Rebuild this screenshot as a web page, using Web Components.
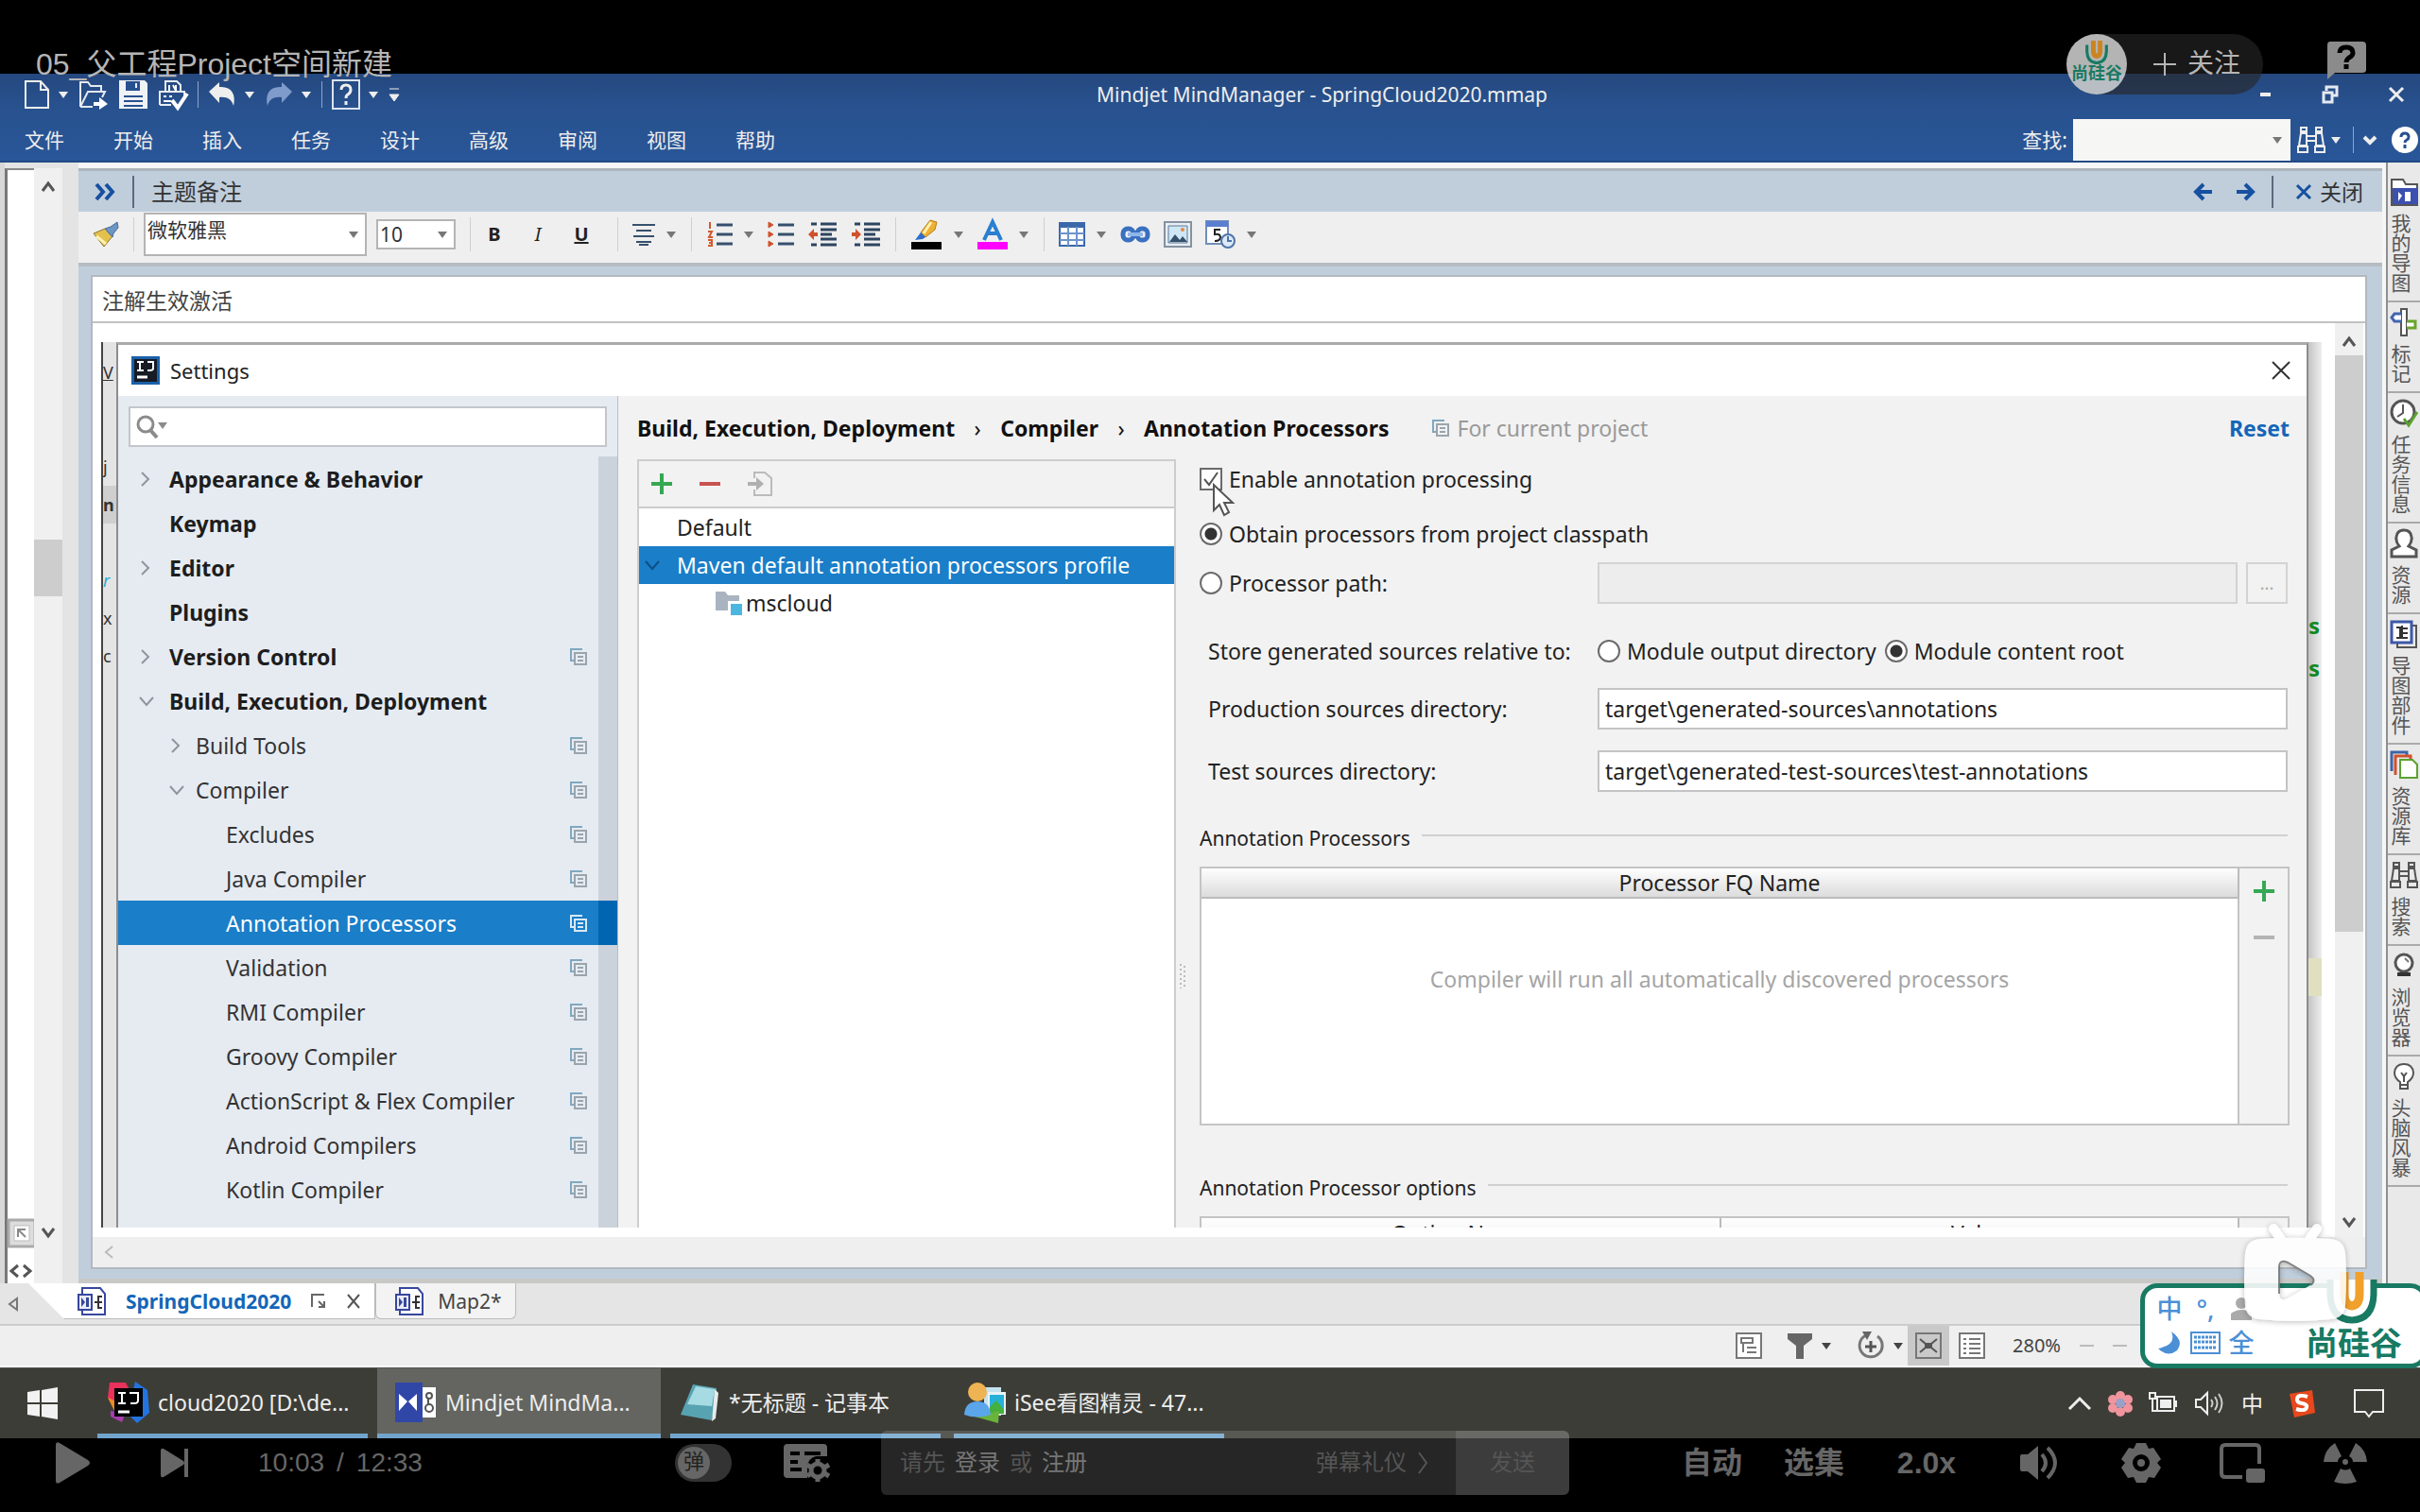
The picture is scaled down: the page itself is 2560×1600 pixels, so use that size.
<!DOCTYPE html>
<html lang="zh-CN">
<head>
<meta charset="utf-8">
<title>05_父工程Project空间新建</title>
<style>
  html, body { margin: 0; height: 100%; background: #000; }
  body { font-family: "Noto Sans", "Noto Sans CJK SC", sans-serif; font-size: 23px; line-height: 30px; color: #222; }
</style>
</head>
<body>
<video-page></video-page>

<script>
// name: [width, height, svg markup]
const ICONS = {
  doc: [28, 32, '<path d="M2 2h16l8 9v19H2zM18 2v9h8" fill="none" stroke="#eee" stroke-width="2"/>'],
  open: [32, 32, '<path d="M2 29V3h8l3 4h11v6M2 29l8-16h18l-3 6M2 29h13" fill="none" stroke="#e4e9f2" stroke-width="2"/><path d="M16 24h6v-5l9 7-9 6v-4h-6z" fill="#fff"/>'],
  save: [32, 32, '<path d="M1 1h27l3 3v27H1z" fill="#f0f2f6"/><path d="M8 2h15v10H8z" fill="#27508f"/><path d="M17 3h4v7h-4zM6 18h20M6 23h20M6 28h20" fill="#eef" stroke="#27508f" stroke-width="2"/>'],
  print: [32, 32, '<path d="M8 13V2h12l4 4v7M2 27V13h26v6M2 27h12" fill="none" stroke="#e8ecf4" stroke-width="2"/><path d="M12 6v6M16 6l3 6V6M6 18h3M12 18h3M6 23h8" stroke="#fff" stroke-width="2"/><path d="M15 22l6 8L31 15" fill="none" stroke="#fff" stroke-width="4"/>'],
  undo: [30, 28, '<path d="M1 11L12 1v5c13-1 18 8 15 20-2-7-7-10-15-9v6z" fill="#eee"/>'],
  redo: [30, 28, '<path d="M29 11L18 1v5C5 5 0 14 3 26c2-7 7-10 15-9v6z" fill="#7f9bcb"/>'],
  helpbox: [30, 32, '<path d="M1 1h28v30H1z" fill="none" stroke="#dbe2ef" stroke-width="2"/><path d="M10 11q0-5 5-5t5 5q0 3-3 5-2 1-2 4M15 23v4" fill="none" stroke="#eee" stroke-width="3"/>'],
  caret: [12, 8, '<path d="M1 1h10L6 8z" fill="currentColor"/>'],
  more: [12, 16, '<path d="M1 2h10M1 8h10L6 15z" fill="#eee" stroke="#eee"/>'],
  min: [14, 6, '<path d="M1 1h11v4H1z" fill="#eee"/>'],
  restore: [18, 20, '<path d="M5 6V2h11v9h-4M2 8h9v10H2z" fill="none" stroke="#e5e9f2" stroke-width="3"/>'],
  cross: [18, 20, '<path d="M2 3l14 14M16 3L2 17" stroke="currentColor" stroke-width="3" fill="none"/>'],
  thincross: [22, 22, '<path d="M2 2l18 18M20 2L2 20" stroke="#333" stroke-width="2"/>'],
  binoc: [32, 30, '<g fill="none" stroke="currentColor" stroke-width="2"><path d="M5 2h6v4H5zM21 2h6v4h-6zM5 8h6v13H3zM21 8h6l2 13h-8zM2 22h10v6H2zM20 22h10v6H20zM11 11h10M11 16h10"/></g>'],
  chevd: [14, 12, '<path d="M1 3l6 6 6-6" stroke="currentColor" stroke-width="4" fill="none"/>'],
  helpround: [28, 28, '<circle cx="14" cy="14" r="14" fill="#fff"/><path d="M10 11q0-4 4-4t4 4q0 2-2 3t-2 3M14 19v4" fill="none" stroke="#27508f" stroke-width="3"/>'],
  dbl: [22, 20, '<path d="M2 2l7 8-7 8M12 2l7 8-7 8" fill="none" stroke="#1750a0" stroke-width="4"/>'],
  left: [20, 20, '<path d="M19 10H3M10 2l-8 8 8 8" fill="none" stroke="#1750a0" stroke-width="4"/>'],
  right: [20, 20, '<path d="M1 10h16M10 2l8 8-8 8" fill="none" stroke="#1750a0" stroke-width="4"/>'],
  up: [16, 14, '<path d="M2 12l6-8 6 8" fill="none" stroke="#555" stroke-width="3"/>'],
  down: [16, 14, '<path d="M2 2l6 8 6-8" fill="none" stroke="#555" stroke-width="3"/>'],
  scrollleft: [12, 16, '<path d="M10 2L3 8l7 6" fill="none" stroke="#bbb" stroke-width="2"/>'],
  brush: [28, 28, '<path d="M1 13l12-5 8 8-9 11z" fill="#e4c04f" stroke="#8c7630"/><path d="M4 16l10 8" stroke="#fff3b0" stroke-width="3"/><path d="M13 8l6-2 7-5 1 6-5 6-1 4z" fill="#6d96c4" stroke="#456a98"/>'],
  center: [24, 24, '<path d="M0 2h24M4 8h16M1 14h22M4 20h16M7 23h10" stroke="#36506c" stroke-width="2"/>'],
  numlist: [28, 28, '<path d="M11 4h17M11 14h17M11 24h17" stroke="#36506c" stroke-width="3"/><path d="M4 1v7M2 11h4l-3 6h4M2 20h4v6H2M3 23h3" stroke="#d25a30" stroke-width="2" fill="none"/>'],
  bullist: [28, 28, '<path d="M11 4h17M11 14h17M11 24h17" stroke="#36506c" stroke-width="3"/><path d="M1 1l5 3-5 3zM1 11l5 3-5 3zM1 21l5 3-5 3z" fill="#d0522c" stroke="#d0522c"/>'],
  outdent: [32, 26, '<path d="M4 2h6M14 2h17M14 8h17M14 13h12M14 18h17M4 24h6M14 24h17" stroke="#2d4560" stroke-width="3"/><path d="M1 13l6-6v4h4v4H7v4z" fill="#d0522c"/>'],
  indent: [32, 26, '<path d="M4 2h6M14 2h17M14 8h17M14 13h12M14 18h17M4 24h6M14 24h17" stroke="#2d4560" stroke-width="3"/><path d="M11 13L5 7v4H1v4h4v4z" fill="#d0522c"/>'],
  mark: [34, 32, '<path d="M1 24h32v8H1z" fill="#000"/><path d="M11 14L21 1l7 2-2 8-10 8z" fill="#efb132" stroke="#b37d17"/><path d="M22 3l-8 12" stroke="#fff0b0" stroke-width="3"/><path d="M5 22l6-8 5 5-3 2z" fill="#2e6ecb"/>'],
  acolor: [32, 32, '<path d="M0 24h32v8H0z" fill="#f0f"/><path d="M7 22L16 3l9 19M11 15h10" fill="none" stroke="#2a7fd0" stroke-width="4"/>'],
  grid: [28, 26, '<path d="M1 1h26v24H1z" fill="#fff" stroke="#3b68ab" stroke-width="2"/><path d="M1 1h26v5H1z" fill="#3b68ab"/><path d="M10 5v20M19 5v20M1 12h26M1 19h26" stroke="#6d94cc" stroke-width="2"/>'],
  chain: [32, 18, '<g fill="none" stroke="#3a70c0" stroke-width="5"><rect x="3" y="3" width="11" height="12" rx="5"/><rect x="18" y="3" width="11" height="12" rx="5"/></g><path d="M8 9h16" stroke="#8fb6ea" stroke-width="4"/>'],
  pic: [30, 28, '<path d="M1 1h28v26H1z" fill="#e9eef4" stroke="#8492a2" stroke-width="2"/><path d="M5 5h20v18H5z" fill="#cfe6f5" stroke="#5e7894"/><path d="M6 22l6-8 5 6 3-4 5 6z" fill="#36506c"/><circle cx="20" cy="9" r="2" fill="#e58a40"/>'],
  date: [32, 30, '<path d="M1 1h23v24H1z" fill="#fff" stroke="#718db8" stroke-width="2"/><path d="M1 1h23v6H1z" fill="#5b7fd0"/><path d="M16 10h-6v5q6-1 6 3t-6 4" fill="none" stroke="#222" stroke-width="2"/><circle cx="24" cy="22" r="7" fill="#dce9f8" stroke="#4d73a8" stroke-width="2"/><path d="M24 17v5h4" stroke="#4d73a8" stroke-width="2" fill="none"/>'],
  idea: [30, 30, '<path d="M0 0h30v30H0z" fill="#1b61a8"/><path d="M3 3h24v24H3z" fill="#161b24"/><path d="M6 6h7M9 6v9M6 15h7M17 6h6v7q0 2-4 2h-2" fill="none" stroke="#fff" stroke-width="2"/><path d="M6 22h11" stroke="#fff" stroke-width="3"/>'],
  find: [34, 26, '<circle cx="11" cy="10" r="8" fill="none" stroke="#8b8b8b" stroke-width="3"/><path d="M16 16l7 8" stroke="#8b8b8b" stroke-width="4"/><path d="M24 8h10l-5 7z" fill="#8b8b8b"/>'],
  treeright: [12, 16, '<path d="M3 1l7 7-7 7" fill="none" stroke="#8f959c" stroke-width="2"/>'],
  treedown: [16, 12, '<path d="M1 2l7 8 7-8" fill="none" stroke="currentColor" stroke-width="2"/>'],
  copy: [18, 18, '<path d="M13 1H1v12h3" fill="none" stroke="var(--copy-a, #7fa8c0)" stroke-width="2"/><path d="M5 5h12v12H5z" fill="none" stroke="var(--copy-b, #9aa4ac)" stroke-width="2"/><path d="M8 9h6M8 13h6" stroke="var(--copy-b, #9aa4ac)" stroke-width="2"/>'],
  plus: [24, 24, '<path d="M12 1v22M1 12h22" stroke="#35a853" stroke-width="4"/>'],
  minus: [24, 24, '<path d="M1 12h22" stroke="currentColor" stroke-width="4"/>'],
  import: [28, 28, '<path d="M8 8V2h11l7 6v18H8v-6" fill="none" stroke="#bbb" stroke-width="2"/><path d="M1 14h10" stroke="#b0b0b0" stroke-width="4"/><path d="M10 7l8 7-8 7z" fill="#b0b0b0"/>'],
  module: [30, 28, '<path d="M1 2h10l3 4h12v16H1z" fill="#a9b4c0"/><path d="M14 12h15v15H14z" fill="#fff"/><path d="M17 15h12v12H17z" fill="#4bb7e0"/>'],
  pointer: [24, 36, '<path d="M2 2v27l6-6 5 11 5-3-5-10h9z" fill="#fff" stroke="#555" stroke-width="2"/>'],
  grip: [8, 28, '<path d="M2 1v26M6 3v24" stroke="#bbb" stroke-width="2" stroke-dasharray="2 3"/>'],
  mymap: [30, 30, '<path d="M2 29V2h12l3 5h12v22z" fill="#fff" stroke="#555" stroke-width="2"/><path d="M3 11h26v17H3z" fill="#3c50b0"/><path d="M9 15l4 4-4 6zM16 15h6v10h-6z" fill="#fff"/>'],
  tag: [30, 30, '<path d="M12 1h6v28h-6z" fill="#fff" stroke="#555" stroke-width="2"/><path d="M12 6H5l-3 4 3 4h7" fill="#fff" stroke="#4466b0" stroke-width="3"/><path d="M18 14h9v7h-9" fill="#fff" stroke="#6aa52c" stroke-width="3"/>'],
  task: [30, 30, '<circle cx="14" cy="14" r="12" fill="#fff" stroke="#555" stroke-width="3"/><path d="M14 6v9l-6 4" fill="none" stroke="#555" stroke-width="2"/><path d="M15 21l5 7 9-14" fill="none" stroke="#5ba22e" stroke-width="3"/>'],
  person: [30, 30, '<path d="M10 18q-4-5-3-10 1-7 8-7t8 7q1 5-3 10l8 4v7H2v-7z" fill="#fff" stroke="#555" stroke-width="3"/>'],
  parts: [30, 30, '<path d="M8 8v21h20V6h-4" fill="none" stroke="#555" stroke-width="2"/><path d="M2 2h21v22H2z" fill="#fff" stroke="#3d58a8" stroke-width="3"/><path d="M7 8h4v11H7M13 6v14M13 9h6M13 14h6M13 19h6" stroke="#333" fill="none" stroke-width="2"/>'],
  lib: [30, 30, '<path d="M2 22V2h16v4" fill="none" stroke="#3f64a8" stroke-width="3"/><path d="M6 26V6h16v4" fill="none" stroke="#d0522c" stroke-width="3"/><path d="M11 10h13l5 5v14H11z" fill="#fff" stroke="#5ba22e" stroke-width="2"/>'],
  globe: [30, 30, '<circle cx="15" cy="12" r="9" fill="#fff" stroke="#555" stroke-width="3"/><path d="M8 22h14v4H8z" fill="#333"/><path d="M16 7l4 4" stroke="#777" stroke-width="2"/>'],
  bulb: [30, 30, '<path d="M11 21q-6-4-6-10 1-9 10-9t10 9q0 6-6 10v7h-8zM11 24h8M12 11l3 4 3-4M15 15v6" fill="#fff" stroke="#555" stroke-width="2"/>'],
  tri: [12, 16, '<path d="M10 2L2 8l8 6z" fill="none" stroke="#777" stroke-width="2"/>'],
  mapdoc: [30, 32, '<path d="M5 2h19l5 6v22H5z" fill="#fff" stroke="#37479d" stroke-width="2"/><path d="M1 9h14v16H1z" fill="#e9ecfa" stroke="#37479d" stroke-width="2"/><path d="M4 12l4 5-4 5zM9 12h3v10H9z" fill="#37479d"/><path d="M18 17h4M26 11h-4v12h4M22 17h4" stroke="#333" stroke-width="2" fill="none"/>'],
  pin: [16, 16, '<path d="M1 14V1h13M8 8l6 6M14 8v6H8" fill="none" stroke="#666" stroke-width="2"/>'],
  tabx: [16, 18, '<path d="M2 2l12 14M14 2L2 16" stroke="#555" stroke-width="2"/>'],
  form: [28, 28, '<path d="M1 1h26v26H1z" fill="#fff" stroke="#777" stroke-width="2"/><path d="M6 6h12v5H6zM12 16h10M12 21h10M8 11v10" fill="none" stroke="#777" stroke-width="2"/>'],
  funnel: [28, 28, '<path d="M1 1h26v6l-9 7v14h-8V14L1 7z" fill="#666"/>'],
  zoomfit: [30, 30, '<path d="M22 5a12 12 0 1 1-12-1" fill="none" stroke="#777" stroke-width="3"/><path d="M6 0h10l-5 9z" fill="#666"/><path d="M15 10v12M9 16h12" stroke="#555" stroke-width="3"/>'],
  fitmap: [28, 28, '<path d="M1 1h26v26H1z" fill="none" stroke="#777" stroke-width="2"/><path d="M5 7l6 5M23 7l-6 5M5 21l6-5M23 21l-6-5" stroke="#555" stroke-width="2"/><path d="M10 11h8v6h-8z" fill="#555"/>'],
  outline: [28, 28, '<path d="M1 1h26v26H1z" fill="#fff" stroke="#777" stroke-width="2"/><path d="M5 7h3M11 7h12M5 12h3M11 12h12M5 17h3M11 17h12M5 22h3M11 22h12" stroke="#777" stroke-width="2"/>'],
  win: [34, 34, '<path d="M1 5l13-2v13H1zM16 3l17-3v16H16zM1 18h13v13L1 29zM16 18h17v16l-17-3z" fill="#f2f2f2"/>'],
  ij: [46, 46, '<path d="M3 2h17l6 12-8 18L1 18z" fill="#e8315b"/><path d="M1 18l9 4v14z" fill="#f08a24"/><path d="M30 1l13 9 2 24-13 11-10-10z" fill="#2374e1"/><path d="M4 32l16 2-4 10-12-6z" fill="#a93cb0"/><path d="M8 8h30v30H8z" fill="#000"/><path d="M12 13h8M16 13v11M12 24h8M24 13h9v8q0 3-4 3h-4" stroke="#fff" stroke-width="2" fill="none"/><path d="M12 33h12" stroke="#fff" stroke-width="3"/>'],
  mm: [46, 44, '<path d="M28 6h16v32H28z" fill="#fff"/><path d="M1 1h29v42H1z" fill="#3147a8"/><path d="M5 13l9 8-9 10zM15 21l9-8v18z" fill="#fff"/><circle cx="37" cy="15" r="3" fill="none" stroke="#555" stroke-width="2"/><circle cx="37" cy="28" r="4" fill="none" stroke="#555" stroke-width="2"/><path d="M36 18v6" stroke="#555" stroke-width="2"/>'],
  note: [44, 44, '<path d="M14 3l25 4-5 34L1 35z" fill="#57a3b2"/><path d="M17 5l20 3-3 18-26-2z" fill="#a6dbe3"/><path d="M37 8l4 4-3 27-4 3z" fill="#e6eceb"/>'],
  isee: [46, 46, '<path d="M22 7h18v30H22z" fill="#c4e2f0"/><path d="M26 12h19v24H26z" fill="#e9f3f6"/><path d="M28 15h15v18H28z" fill="#27b0d8"/><path d="M28 28l7-7 8 10v4H28z" fill="#45b03b"/><path d="M12 38l26-6-1 13z" fill="#69b33a"/><path d="M1 36q1-14 14-14t14 14q-14 5-28 0z" fill="#5ba6ea"/><circle cx="15" cy="12" r="10" fill="#eeb352"/>'],
  trayup: [26, 16, '<path d="M2 14L13 3l11 11" fill="none" stroke="#eee" stroke-width="3"/>'],
  flower: [28, 28, '<g fill="#f0959d"><circle cx="14" cy="6" r="5"/><circle cx="22" cy="10" r="5"/><circle cx="22" cy="19" r="5"/><circle cx="14" cy="23" r="5"/><circle cx="6" cy="19" r="5"/><circle cx="6" cy="10" r="5"/></g><circle cx="14" cy="14" r="5" fill="#9aa0c8"/>'],
  battery: [32, 24, '<path d="M9 5h18v15H9zM29 9v7" fill="none" stroke="#eee" stroke-width="2"/><path d="M12 8h12v9H12z" fill="#eee"/><path d="M1 1h6v6H1zM4 7v13h4" fill="none" stroke="#eee" stroke-width="2"/>'],
  speaker: [32, 26, '<path d="M2 9h5l7-7v22l-7-7H2z" fill="none" stroke="#eee" stroke-width="2"/><path d="M18 9q3 4 0 8M22 6q5 7 0 14M26 3q7 10 0 20" fill="none" stroke="#ccc" stroke-width="2"/>'],
  sogou: [30, 30, '<path d="M2 5l24-4 3 24-22 5z" fill="#e8481c"/><path d="M21 8q-10-3-11 2-1 4 5 5t5 4q-1 5-11 2" fill="none" stroke="#fff" stroke-width="4"/>'],
  notify: [32, 32, '<path d="M1 2h30v23H20l-4 5-4-5H1z" fill="none" stroke="#eee" stroke-width="2"/>'],
  play: [40, 46, '<path d="M2 4q0-4 4-2l30 18q4 3 0 6L6 44q-4 2-4-2z" fill="#666"/>'],
  next: [32, 32, '<path d="M1 3q0-3 3-2l21 13q2 2 0 4L4 31q-3 1-3-2z" fill="#666"/><path d="M28 1v30" stroke="#666" stroke-width="4"/>'],
  danmu: [50, 42, '<path d="M5 1h38q4 0 4 4v9H35q-8 2-9 11v12H5q-4 0-4-4V5q0-4 4-4z" fill="#666"/><path d="M8 11h10M23 11h17M8 20h8M8 28h12" stroke="#000" stroke-width="4"/><circle cx="37" cy="29" r="7" fill="none" stroke="#666" stroke-width="5"/><path d="M37 17v5M37 36v5M26 23l4 3M44 32l5 3M26 35l4-3M44 26l5-3" stroke="#666" stroke-width="5"/>'],
  volume: [42, 38, '<path d="M1 12q0-2 2-2h6L20 1v36L9 28H3q-2 0-2-2z" fill="#666"/><path d="M24 10q8 9 0 18M30 3q16 16 0 32" fill="none" stroke="#666" stroke-width="4"/>'],
  gear: [46, 44, '<path d="M18 1h10l3 6 5-1 8 12-4 4 4 5-7 11-6-1-3 6H18l-3-6-6 1-7-11 4-5-4-4 8-12 5 1z" fill="#666"/><circle cx="23" cy="22" r="9" fill="#000"/><circle cx="23" cy="22" r="4" fill="#666"/>'],
  pip: [50, 42, '<path d="M24 36H6q-4 0-4-4V6q0-4 4-4h32q4 0 4 4v16" fill="none" stroke="#666" stroke-width="4"/><rect x="28" y="27" width="20" height="15" rx="3" fill="#666"/>'],
  nuclear: [48, 44, '<path d="M13 1Q2 8 1 21h15q0-4 4-6zM35 1q11 7 12 20H32q0-4-4-6zM19 28l-7 14q12 4 24 0l-7-14q-5 3-10 0z" fill="#666"/><circle cx="24" cy="21" r="3" fill="#666"/>'],
  ask: [44, 42, '<path d="M5 1h34q4 0 4 4v26q0 3-4 3H10l-8 7V5q0-4 3-4z" fill="#8b8b8b"/><path d="M15 13q0-6 7-6t7 6q0 3-4 5-3 2-3 5M22 25v5" fill="none" stroke="#000" stroke-width="5"/>'],
  ulogo: [54, 58, '<path d="M4 12v16q1 26 23 27 22-1 23-27V12" fill="#fff" stroke="#187a63" stroke-width="7"/><path d="M19 4v23q0 12 8 13 8-1 8-13V4" fill="none" stroke="#f0a02b" stroke-width="9"/>'],
  tv: [110, 106, '<defs><filter id="s" x="-20%" y="-20%" width="140%" height="140%"><feDropShadow dx="0" dy="1" stdDeviation="3" flood-opacity=".3"/></filter></defs><g opacity=".88" filter="url(#s)"><path d="M32 6l9 13M78 6l-9 13" stroke="#fff" stroke-width="10" stroke-linecap="round"/><path fill-rule="evenodd" d="M18 17q36-3 74 0 15 1 16 16 2 26 0 54-1 14-16 15-37 4-74 0-15-1-16-15-2-28 0-54 1-15 16-16zM38 47v28q0 9 9 5l24-14q7-5 0-10L47 42q-9-4-9 5z" fill="#fff"/><path d="M38 75V47q0-9 9-5l24 14q7 5 0 10" fill="none" stroke="#777" stroke-width="2"/></g>'],
  moon: [26, 26, '<path d="M15 1q6 14-14 18 10 10 20 2 8-10-6-20z" fill="#4b8fd6"/>'],
  keyb: [32, 26, '<path d="M1 2h30v22H1z" fill="#fff" stroke="#4b8fd6" stroke-width="2"/><path d="M4 7h24M4 12h24M4 18h24" stroke="#4b8fd6" stroke-width="3" stroke-dasharray="3 1"/>'],
  user: [24, 26, '<circle cx="12" cy="7" r="6" fill="#aaa"/><path d="M1 25V18q11-8 22 0v7z" fill="#aaa"/>'],
  mapnav: [30, 30, '<path d="M1 1h28v28H1z" fill="#ddd" stroke="#aaa" stroke-width="3"/><path d="M7 7h16v16H7z" fill="#fff" stroke="#bbb"/><path d="M11 19v-8h8M11 11l8 8" fill="none" stroke="#888" stroke-width="2"/>'],
  navlr: [28, 14, '<path d="M11 1L4 7l7 6M17 1l7 6-7 6" fill="none" stroke="#555" stroke-width="3"/>'],
};

const define = (name, css, html) => {
  customElements.define(name, class extends HTMLElement {
    constructor() {
      super();
      this.attachShadow({ mode: 'open' });
    }
    connectedCallback() {
      const base = `*, *::before { box-sizing: border-box; }
        button { font: inherit; color: inherit; background: none; border: 0; padding: 0; margin: 0; display: flex; align-items: center; }
        input, select { font: inherit; color: inherit; margin: 0; border-radius: 0; }`;
      this.shadowRoot.innerHTML = `<style>${base}${css}</style>${html}`;
    }
  });
};

class XIcon extends HTMLElement {
  constructor() {
    super();
    this.attachShadow({ mode: 'open' });
  }
  connectedCallback() {
    const [w, h, body] = ICONS[this.getAttribute('name')];
    this.shadowRoot.innerHTML = `
      <style>:host { display: inline-flex; flex: none; } svg { display: block; overflow: visible; }</style>
      <svg width="${w}" height="${h}" viewBox="0 0 ${w} ${h}" aria-hidden="true">${body}</svg>`;
  }
}
customElements.define('x-icon', XIcon);

const icon = (name) => `<x-icon name="${name}"></x-icon>`;
const tool = (name, label, caret) =>
  `<button aria-label="${label}">${icon(name)}${caret ? icon('caret') : ''}</button>`;

define('app-header', `
  :host { display: block; height: 94px; background: linear-gradient(#25487f, #28528f 40%, #295698); color: #eee; border-bottom: 2px solid #234a86; box-sizing: border-box; }
  .top { display: grid; grid-template-columns: auto 1fr auto; align-items: center; height: 44px; padding: 0 16px 0 25px; font-size: 21px; text-align: center; }
  .caption { padding-right: 16px; }
  .quick { display: flex; align-items: center; gap: 10px; }
  .quick button { gap: 8px; }
  .sep { width: 1px; height: 28px; background: #8ea5cb; }
  .win { display: flex; justify-content: flex-end; align-items: center; gap: 52px; }
  .bar { display: flex; align-items: center; height: 48px; font-size: 21px; padding: 3px 0 0 26px; }
  nav { display: flex; gap: 52px; flex: 1; }
  .find { display: flex; align-items: center; gap: 6px; }
  .find .sep { margin: 0 4px 0 6px; }
  .find button { gap: 4px; }
  .find button:last-child { margin: 0 2px 0 10px; }
  select { width: 230px; height: 44px; border: 0; background: #f6f6f5; appearance: none; }
  .combo { display: grid; align-items: center; }
  .combo > * { grid-area: 1 / 1; }
  .combo x-icon { justify-self: end; margin-right: 8px; color: #777; }
`, `
  <div class="top">
    <div class="quick">
      ${tool('doc', '新建', 1)}${tool('open', '打开')}${tool('save', '保存')}${tool('print', '打印')}
      <span class="sep"></span>${tool('undo', '撤销', 1)}${tool('redo', '重做', 1)}
      <span class="sep"></span>${tool('helpbox', '帮助', 1)}${tool('more', '更多')}
    </div>
    <div class="caption">Mindjet MindManager - SpringCloud2020.mmap</div>
    <div class="win">${tool('min', '最小化')}${tool('restore', '还原')}${tool('cross', '退出')}</div>
  </div>
  <div class="bar">
    <nav>${['文件', '开始', '插入', '任务', '设计', '高级', '审阅', '视图', '帮助'].map(t => `<button>${t}</button>`).join('')}</nav>
    <div class="find">
      <label for="q">查找:</label>
      <span class="combo"><select id="q"><option></option></select>${icon('caret')}</span>
      ${tool('binoc', '搜索', 1)}<span class="sep"></span>${tool('chevd', '展开')}${tool('helpround', '帮助')}
    </div>
  </div>`);

define('map-gutter', `
  :host { display: grid; grid-template-columns: 31px 30px; justify-content: start; border-left: 5px solid #d8d8d8; background: #e4e4e4; padding-top: 6px; }
  .map { background: #fff; border-left: 3px solid #777; border-top: 2px solid #888; display: flex; flex-direction: column; justify-content: flex-end; gap: 8px; }
  .foot { height: 30px; }
  .scroll { background: #f0f0f0; display: flex; flex-direction: column; align-items: center; padding: 12px 0 46px; }
  .thumb { width: 100%; height: 60px; background: #cdcdcd; margin: 367px 0 auto; }
`, `
  <div class="map">${icon('mapnav')}<div class="foot">${icon('navlr')}</div></div>
  <div class="scroll">${icon('up')}<div class="thumb"></div>${icon('down')}</div>`);

define('side-tabs', `
  :host { display: flex; flex-direction: column; background: #e9e9e9; border-left: 2px solid #8f8f8f; padding-top: 10px; overflow: hidden; }
  button { flex-direction: column; gap: 8px; padding: 6px 0 8px; border-bottom: 2px solid #aaa; font-size: 21px; line-height: 24px; color: #555; border-top-right-radius: 10px; }
  button span { writing-mode: vertical-rl; margin-right: 8px; }
`, [['mymap', '我的导图'], ['tag', '标记'], ['task', '任务信息'], ['person', '资源'], ['parts', '导图部件'],
    ['lib', '资源库'], ['binoc', '搜索'], ['globe', '浏览器'], ['bulb', '头脑风暴']]
    .map(([i, t]) => `<button>${icon(i)}<span>${t}</span></button>`).join(''));

define('note-toolbar', `
  :host { display: block; }
  .head { display: flex; align-items: center; height: 43px; padding: 0 20px 0 17px; gap: 18px; font-size: 24px; color: #333; }
  .head b { font-weight: 400; flex: 1; }
  .sep { width: 2px; height: 34px; background: #5a6b7c; }
  .head .prev { display: flex; gap: 24px; }
  .head .close { gap: 8px; margin-left: 5px; color: #1750a0; font-size: 23px; }
  .head .close span { color: #333; }
  .tools { display: flex; align-items: center; height: 58px; padding: 0 15px 6px; background: #efefef; border-bottom: 4px solid #b5bcc3; color: #777; }
  .tools > div { display: flex; align-items: center; gap: 14px; }
  .tools button { gap: 11px; }
  .tools .line { width: 1px; height: 36px; background: #cfcfcf; margin: 0 15px; }
  .tools .line.near { margin: 0 10px 0 15px; }
  .tools > .style { gap: 16px; padding-right: 8px; color: #222; font-size: 20px; }
  .style button { width: 30px; justify-content: center; }
  .combo { display: grid; align-items: center; }
  .combo > * { grid-area: 1 / 1; }
  .combo x-icon { justify-self: end; margin-right: 8px; }
  select { appearance: none; width: 84px; height: 32px; border: 2px solid #b4b4b4; background: #fff; padding: 0 2px; font-size: 21px; line-height: 24px; color: #333; }
  select.wide { width: 236px; height: 46px; padding-bottom: 10px; }
  .tools > .fonts { gap: 10px; }
`, `
  <div class="head">
    ${tool('dbl', '折叠')}<span class="sep"></span><b>主题备注</b>
    <div class="prev">${tool('left', '上一个')}${tool('right', '下一个')}</div><span class="sep"></span>
    <button class="close">${icon('cross')}<span>关闭</span></button>
  </div>
  <div class="tools">
    ${tool('brush', '格式刷')}<span class="line near"></span>
    <div class="fonts">
      <span class="combo"><select class="wide" aria-label="字体"><option>微软雅黑</option></select>${icon('caret')}</span>
      <span class="combo"><select aria-label="字号"><option>10</option></select>${icon('caret')}</span>
    </div>
    <span class="line near"></span>
    <div class="style"><button><b>B</b></button><button><i>I</i></button><button><u><b>U</b></u></button></div>
    <span class="line"></span>
    ${tool('center', '对齐', 1)}<span class="line"></span>
    <div>${tool('numlist', '编号', 1)}${tool('bullist', '项目符号')}${tool('outdent', '减少缩进')}${tool('indent', '增加缩进')}</div>
    <span class="line"></span>
    <div>${tool('mark', '突出显示', 1)}${tool('acolor', '字体颜色', 1)}</div>
    <span class="line"></span>
    <div>${tool('grid', '表格', 1)}${tool('chain', '链接')}${tool('pic', '图片')}${tool('date', '日期', 1)}</div>
  </div>`);

const TREE = [
  [0, 'r', 'Appearance & Behavior'], [0, '', 'Keymap'], [0, 'r', 'Editor'], [0, '', 'Plugins'],
  [0, 'r', 'Version Control', 1], [0, 'd', 'Build, Execution, Deployment'],
  [1, 'r', 'Build Tools', 1], [1, 'd', 'Compiler', 1],
  [2, '', 'Excludes', 1], [2, '', 'Java Compiler', 1], [2, '', 'Annotation Processors', 1, 1],
  [2, '', 'Validation', 1], [2, '', 'RMI Compiler', 1], [2, '', 'Groovy Compiler', 1],
  [2, '', 'ActionScript & Flex Compiler', 1], [2, '', 'Android Compilers', 1], [2, '', 'Kotlin Compiler', 1],
];

define('settings-tree', `
  :host { display: block; background: #e6ebf2; border-right: 1px solid #b9bec5; }
  .search { display: flex; align-items: center; margin: 11px 11px 10px; height: 43px; border: 2px solid #c3c6ca; background: #fff; padding-left: 5px; }
  .search input { flex: 1; border: 0; background: none; outline: 0; }
  .tree { background: linear-gradient(#ccd2db, #ccd2db) right / 20px 100% no-repeat; min-height: 900px; }
  .row { display: flex; align-items: center; width: 100%; height: 47px; padding: 0 32px 0 22px; text-align: left; color: #333; }
  .row .arrow { width: 32px; display: flex; justify-content: flex-start; color: #8f959c; }
  .row .name { flex: 1; }
  .l0 { font-weight: 700; color: #1d1d1d; }
  .l1 { padding-left: 54px; }
  .l1 .arrow { width: 28px; }
  .l2 { padding-left: 82px; }
  .sel { color: #fff; background: linear-gradient(#0065b0, #0065b0) right / 20px 100% no-repeat #1a7ec8; --copy-a: #d8e8f5; --copy-b: #d8e8f5; }
`, `
  <label class="search">${icon('find')}<input aria-label="Search settings"></label>
  <div class="tree">${TREE.map(([lv, a, t, c, s]) => `
    <button class="row l${lv} ${s ? 'sel' : ''}"><span class="arrow">${a ? icon(a === 'r' ? 'treeright' : 'treedown') : ''}</span>
    <span class="name">${t.replace('&', '&amp;')}</span>${c ? icon('copy') : ''}</button>`).join('')}
  </div>`);

define('profile-list', `
  :host { display: block; width: 570px; border: 2px solid #cdcdcd; border-bottom: 0; background: #fff; box-sizing: border-box; }
  .tools { display: flex; align-items: center; gap: 27px; height: 50px; padding-left: 12px; background: #f2f2f2; border-bottom: 2px solid #ccc; color: #c75450; }
  .row { display: flex; align-items: center; width: 100%; height: 40px; padding-left: 6px; }
  .row .arrow { width: 34px; display: flex; color: #0d4f86; }
  .row.sel { background: #1a7ec8; color: #fff; }
  .row.kid { padding-left: 80px; gap: 3px; }
`, `
  <div class="tools">${tool('plus', 'Add profile')}${tool('minus', 'Remove profile')}${tool('import', 'Move to')}</div>
  <button class="row"><span class="arrow"></span>Default</button>
  <button class="row sel"><span class="arrow">${icon('treedown')}</span>Maven default annotation processors profile</button>
  <button class="row kid">${icon('module')}mscloud</button>`);

define('processor-form', `
  :host { display: block; flex: 1; min-width: 0; }
  label { display: flex; align-items: center; gap: 7px; color: #222; white-space: nowrap; }
  input[type=checkbox], input[type=radio] { appearance: none; width: 24px; height: 24px; border: 2px solid #6b6b6b; background: #fff; }
  input[type=radio] { border-radius: 50%; }
  input[type=radio]:checked { background: radial-gradient(#333 0 6px, #fff 7px); }
  .check { display: inline-grid; position: relative; }
  .check svg { position: absolute; left: 4px; top: 4px; }
  .check x-icon { position: absolute; left: 13px; top: 16px; z-index: 1; }
  .opt { height: 42px; }
  .gap { margin-top: 16px; }
  .line { display: grid; grid-template-columns: 421px 1fr; align-items: center; height: 44px; margin-right: 2px; }
  .line > label:first-child.in { padding-left: 9px; }
  .line > span { padding-left: 9px; white-space: nowrap; }
  .path { margin-top: 9px; }
  .store { margin-top: 28px; }
  .prod { margin-top: 17px; }
  .test { margin-top: 22px; }
  .pair { display: flex; gap: 9px; }
  .field { width: 100%; height: 44px; border: 2px solid #c4c4c4; background: #fff; padding: 0 6px; min-width: 0; }
  .field:disabled { background: #ededed; border-color: #d3d3d3; }
  .dots { width: 44px; flex: none; height: 44px; border: 2px solid #d3d3d3; justify-content: center; color: #aaa; font-size: 18px; }
  h3 { display: flex; align-items: center; gap: 12px; margin: 34px 2px 15px 0; font-size: 21px; font-weight: 400; }
  h3::after { content: ""; flex: 1; height: 2px; background: #d0d0d0; margin-bottom: 6px; }
  .wrap { display: grid; grid-template-columns: minmax(0, 1fr) 51px; border: 2px solid #c4c4c4; height: 274px; background: #fff; }
  .wrap table { width: 100%; border-collapse: collapse; table-layout: fixed; height: 100%; }
  th { height: 30px; padding: 0; font-weight: 400; background: linear-gradient(#fefefe, #dcdcdc); border-bottom: 2px solid #bbb; border-right: 2px solid #bbb; }
  td { padding: 0 0 68px; text-align: center; color: #a5a5a5; border-right: 2px solid #c4c4c4; }
  .side { background: #f2f2f2; display: flex; flex-direction: column; align-items: center; padding-top: 12px; gap: 25px; color: #b4b4b4; }
  .second { margin-top: 51px; }
  .wrap.two { height: 60px; }
  .wrap.two table { height: 34px; }
  .two th { background: linear-gradient(#fefefe, #eee); }
`, `
  <label class="opt"><span class="check"><input type="checkbox" checked><svg width="16" height="16"><path d="M1 8l5 6L15 1" fill="none" stroke="#555" stroke-width="2"/></svg>${icon('pointer')}</span>Enable annotation processing</label>
  <label class="opt gap"><input type="radio" name="src" checked>Obtain processors from project classpath</label>
  <div class="line path">
    <label><input type="radio" name="src">Processor path:</label>
    <div class="pair"><input class="field" disabled aria-label="Processor path"><button class="dots">...</button></div>
  </div>
  <div class="line store">
    <span>Store generated sources relative to:</span>
    <div class="pair"><label><input type="radio" name="rel">Module output directory</label><label><input type="radio" name="rel" checked>Module content root</label></div>
  </div>
  <div class="line prod"><label class="in" for="prod">Production sources directory:</label><input class="field" id="prod" value="target\\generated-sources\\annotations"></div>
  <div class="line test"><label class="in" for="test">Test sources directory:</label><input class="field" id="test" value="target\\generated-test-sources\\test-annotations"></div>
  <h3>Annotation Processors</h3>
  <div class="wrap">
    <table><thead><tr><th>Processor FQ Name</th></tr></thead><tbody><tr><td>Compiler will run all automatically discovered processors</td></tr></tbody></table>
    <div class="side">${tool('plus', 'Add')}${tool('minus', 'Remove')}</div>
  </div>
  <h3 class="second">Annotation Processor options</h3>
  <div class="wrap two"><table><thead><tr><th>Option Name</th><th>Value</th></tr></thead></table><div class="side"></div></div>`);

define('settings-dialog', `
  :host { display: flex; flex-direction: column; flex: 1; min-width: 0; background: #f2f2f2; border: 2px solid #8c8c8c; border-top: 3px solid #aaa; border-bottom: 0; overflow: hidden; }
  .title { display: flex; align-items: center; gap: 11px; height: 54px; flex: none; background: #fff; padding: 0 16px 0 14px; font-size: 22px; }
  .title span { flex: 1; }
  .cols { display: grid; grid-template-columns: 529px 1fr; grid-template-rows: minmax(0, 1fr); flex: 1; min-height: 0; }
  .page { display: flex; flex-direction: column; min-width: 0; padding: 0 18px 0 20px; }
  .crumbs { display: flex; align-items: center; height: 67px; flex: none; font-weight: 700; color: #111; white-space: nowrap; }
  .crumbs i { font-style: normal; font-weight: 400; width: 48px; text-align: center; }
  .crumbs .scope { display: flex; align-items: center; gap: 8px; margin: 0 auto 0 46px; font-weight: 400; color: #999; }
  .crumbs a { color: #1466b8; text-decoration: none; }
  .body { display: flex; flex: 1; min-height: 0; }
  .grip { width: 25px; padding: 533px 0 0 3px; }
`, `
  <div class="title">${icon('idea')}<span>Settings</span>${tool('thincross', 'Close')}</div>
  <div class="cols">
    <settings-tree></settings-tree>
    <div class="page">
      <div class="crumbs">Build, Execution, Deployment<i>›</i>Compiler<i>›</i>Annotation Processors
        <span class="scope">${icon('copy')}For current project</span><a href="#reset">Reset</a></div>
      <div class="body"><profile-list></profile-list><div class="grip">${icon('grip')}</div><processor-form></processor-form></div>
    </div>
  </div>`);

define('note-panel', `
  :host { display: flex; flex-direction: column; min-width: 0; background: #c0cedc; border-top: 3px solid #aeb4bb; border-bottom: 5px solid #c8c8c6; margin: 6px 4px 0 0; }
  .paper { display: flex; flex-direction: column; flex: 1; min-height: 0; margin: 9px 16px 10px 13px; background: #fff; border: 2px solid #b3b8bf; }
  .subject { height: 49px; border: 0; border-bottom: 2px solid #c2c2c2; padding: 0 10px; font-size: 23px; color: #444; flex: none; outline: 0; }
  .view { display: flex; flex: 1; min-height: 0; padding-right: 2px; }
  .shot { display: flex; flex: 1; min-width: 0; margin: 20px 14px 10px 9px; border-left: 2px solid #444; }
  .edge { width: 14px; flex: none; overflow: hidden; background: #e4e4e4; font-size: 18px; padding-top: 12px; color: #333; }
  .edge span { display: block; height: 40px; line-height: 40px; white-space: nowrap; }
  .edge .u { text-decoration: underline; margin-bottom: 60px; }
  .edge .b { font-weight: 700; background: #cfcfcf; margin-bottom: 40px; }
  .edge .c { color: #2aa9d2; font-style: italic; }
  .edge.r { background: linear-gradient(90deg, #c4c4c4, #eee); padding-top: 280px; }
  .edge.r span { color: #118822; font-weight: 700; height: 45px; font-size: 24px; }
  .edge.r div { height: 40px; margin-top: 282px; background: #e0e0c0; }
  .scroll { width: 30px; background: #f0f0f0; display: flex; flex-direction: column; align-items: center; padding: 12px 0 8px; }
  .thumb { width: 100%; height: 610px; margin: 8px 0 auto; background: #cdcdcd; }
  .h { height: 32px; flex: none; background: #efefef; display: flex; align-items: center; padding-left: 11px; }
`, `
  <note-toolbar></note-toolbar>
  <div class="paper">
    <input class="subject" aria-label="备注标题" value="注解生效激活">
    <div class="view">
      <div class="shot">
        <div class="edge"><span class="u">V</span><span>j</span><span class="b">n</span><span class="c">r</span><span>x</span><span>c</span></div>
        <settings-dialog></settings-dialog>
        <div class="edge r"><span>s</span><span>s</span><div></div></div>
      </div>
      <div class="scroll">${icon('up')}<div class="thumb"></div>${icon('down')}</div>
    </div>
    <div class="h">${icon('scrollleft')}</div>
  </div>`);

define('map-tabs', `
  :host { display: block; }
  .tabs { display: flex; height: 45px; background: #e5e5e5; border-bottom: 2px solid #ccc; font-size: 21px; padding-left: 8px; }
  .tabs > x-icon { align-self: center; }
  .tab { height: 38px; gap: 15px; padding: 0 14px 0 20px; background: #f3f3f3; border: 1px solid #bbb; border-top: 0; border-radius: 0 0 6px 6px; color: #444; }
  .tab.on { gap: 21px; background: #fff; border-left: 0; border-radius: 0; margin-left: 10px; padding-left: 52px; color: #1466b8; font-weight: 700; clip-path: polygon(0 0, 100% 0, 100% 100%, 38px 100%); }
  .status { display: flex; justify-content: flex-end; align-items: center; height: 44px; gap: 18px; background: #efefef; border-bottom: 2px solid #fafafa; padding-right: 302px; font-size: 20px; color: #444; }
  .status button { gap: 8px; }
  .status button:nth-child(-n+2) { margin-right: 8px; }
  .status .on { background: #c9c9c9; padding: 7px 8px; margin: 0 -8px 0 -14px; }
  .status .zoom { display: flex; gap: 20px; align-items: center; width: 140px; padding-left: 11px; }
  .status .zoom i { width: 15px; height: 2px; background: #bbb; }
`, `
  <div class="tabs">${icon('tri')}
    <button class="tab on">${icon('mapdoc')}<span>SpringCloud2020</span>${icon('pin')}${icon('tabx')}</button>
    <button class="tab">${icon('mapdoc')}<span>Map2*</span></button>
  </div>
  <div class="status">${tool('form', '任务面板')}${tool('funnel', '筛选', 1)}${tool('zoomfit', '展开', 1)}
    <button class="on" aria-label="导图视图">${icon('fitmap')}</button>${tool('outline', '大纲视图')}
    <div class="zoom">280%<i></i><i></i></div></div>`);

define('task-bar', `
  :host { display: flex; height: 75px; background: #3d3d37; border-top: 1px solid #55554f; color: #eee; box-sizing: border-box; }
  .start { width: 103px; padding-left: 28px; }
  .apps { display: flex; gap: 10px; flex: 1; }
  .apps button { width: 286px; gap: 8px; padding: 3px 10px 0; border-bottom: 5px solid #71a5cd; white-space: nowrap; }
  .apps .on { width: 300px; background: #646560; padding-left: 18px; }
  .apps button:last-child { margin-left: 4px; }
  .tray { display: flex; align-items: center; gap: 16px; padding-right: 38px; }
  .tray span { margin: 0 10px 0 2px; }
  .tray .last { margin-left: 24px; }
`, `
  <button class="start" aria-label="开始">${icon('win')}</button>
  <div class="apps">
    <button>${icon('ij')}cloud2020 [D:\\de...</button>
    <button class="on">${icon('mm')}Mindjet MindMa...</button>
    <button>${icon('note')}*无标题 - 记事本</button>
    <button>${icon('isee')}iSee看图精灵 - 47...</button>
  </div>
  <div class="tray">${icon('trayup')}${icon('flower')}${icon('battery')}${icon('speaker')}<span>中</span>${icon('sogou')}<button class="last" aria-label="通知">${icon('notify')}</button></div>`);

define('ime-bar', `
  :host { display: flex; width: 304px; height: 90px; box-sizing: border-box; background: #fff; border: 5px solid #187a63; border-radius: 18px; padding: 0 0 0 12px; color: #4b8fd6; }
  .keys { display: grid; grid-template-columns: 28px 32px 28px; grid-template-rows: 36px 36px; gap: 0 8px; place-items: center; padding-top: 4px; font-size: 27px; font-weight: 500; }
  .brand { position: relative; margin-left: 54px; display: flex; align-items: flex-end; padding-bottom: 4px; font: 700 34px/38px "Noto Sans CJK SC", sans-serif; color: #187a63; white-space: nowrap; }
  .brand x-icon { position: absolute; left: 22px; top: -21px; }
`, `
  <div class="keys"><span>中</span><span>°,</span>${icon('user')}${icon('moon')}${icon('keyb')}<span>全</span></div>
  <div class="brand">${icon('ulogo')}尚硅谷</div>`);

define('player-top', `
  :host { display: flex; align-items: center; padding: 36px 56px 0 38px; font-family: "Liberation Sans", "Noto Sans CJK SC", sans-serif; color: #b5b5b5; }
  h1 { flex: 1; margin: 0; font-size: 32px; line-height: 36px; font-weight: 400; }
  .follow { width: 208px; height: 64px; border-radius: 32px; background: rgba(38, 38, 38, .62); font-size: 28px; gap: 12px; }
  .avatar { width: 64px; height: 64px; border-radius: 50%; background: rgba(255, 255, 255, .68); display: flex; flex-direction: column; align-items: center; padding-top: 6px; font: 700 18px/16px "Noto Sans CJK SC", sans-serif; color: #187a63; margin-right: 16px; }
  .ask { margin-left: 66px; margin-bottom: 8px; }
`, `
  <h1>05_父工程Project空间新建</h1>
  <button class="follow"><span class="avatar"><svg width="26" height="26" viewBox="0 0 54 58"><path d="M4 12v16q1 26 23 27 22-1 23-27V12" fill="none" stroke="#187a63" stroke-width="7"/><path d="M19 2v24q0 12 8 13 8-1 8-13V2" fill="none" stroke="#cc8420" stroke-width="11"/></svg>尚硅谷</span>
    <svg width="24" height="24"><path d="M12 0v24M0 12h24" stroke="#b5b5b5" stroke-width="2"/></svg>关注</button>
  <button class="ask" aria-label="反馈">${icon('ask')}</button>`);

define('player-controls', `
  :host { display: flex; align-items: center; height: 68px; margin: -8px 0 18px; padding: 0 25px 0 57px; position: relative; font-family: "Liberation Sans", "Noto Sans CJK SC", sans-serif; color: #666; }
  .left { display: flex; align-items: center; gap: 72px; flex: 1; font-size: 28px; }
  .time { display: flex; gap: 13px; }
  .switch { width: 60px; height: 40px; border-radius: 20px; background: #333; padding-left: 3px; }
  .switch span { width: 34px; height: 34px; border-radius: 50%; background: #666; color: #222; font-size: 22px; line-height: 32px; }
  .set { margin: 0 54px; }
  .box { display: flex; align-items: center; width: 728px; height: 68px; border-radius: 6px; overflow: hidden; background: rgba(255, 255, 255, .15); font-size: 24px; }
  .box p { flex: 1; display: flex; gap: 10px; margin: 0; padding-left: 20px; color: #555; }
  .box a { color: #777; text-decoration: none; }
  .rule { gap: 10px; margin-right: 28px; color: #555; }
  .send { width: 120px; height: 68px; justify-content: center; background: rgba(255, 255, 255, .1); color: #555; }
  .right { display: flex; margin-left: 97px; font-size: 32px; font-weight: 700; }
  .right button { width: 108px; justify-content: center; }
  .right .speed { width: 130px; }
`, `
  <div class="left">${tool('play', '播放')}${tool('next', '下一个')}<div class="time"><span>10:03</span><span>/</span><span>12:33</span></div></div>
  <button class="switch"><span>弹</span></button>
  <button class="set" aria-label="弹幕设置">${icon('danmu')}</button>
  <div class="box"><p>请先<a href="#login">登录</a><span>或</span><a href="#signup">注册</a></p>
    <button class="rule">弹幕礼仪<svg width="14" height="26"><path d="M3 2l8 11-8 11" fill="none" stroke="#555" stroke-width="2"/></svg></button>
    <button class="send">发送</button></div>
  <div class="right"><button>自动</button><button>选集</button><button class="speed">2.0x</button>${tool('volume', '音量')}${tool('gear', '设置')}${tool('pip', '画中画')}${tool('nuclear', '模式')}</div>`);

define('video-page', `
  :host { display: flex; flex-direction: column; position: relative; height: 100vh; overflow: hidden; padding-top: 78px; box-sizing: border-box; }
  .main { display: grid; grid-template-columns: 83px 1fr 36px; grid-template-rows: minmax(0, 1fr); flex: 1; min-height: 0; background: #f6f6f6; }
  player-top { position: absolute; inset: 0 0 auto; }
  ime-bar { position: absolute; right: -8px; bottom: 152px; }
  .tv { position: absolute; right: 77px; bottom: 200px; }
`, `
  <app-header></app-header>
  <div class="main"><map-gutter></map-gutter><note-panel></note-panel><side-tabs></side-tabs></div>
  <map-tabs></map-tabs>
  <task-bar></task-bar>
  <player-controls></player-controls>
  <player-top></player-top>
  <ime-bar></ime-bar>
  <x-icon class="tv" name="tv"></x-icon>`);
</script>
</body>
</html>
